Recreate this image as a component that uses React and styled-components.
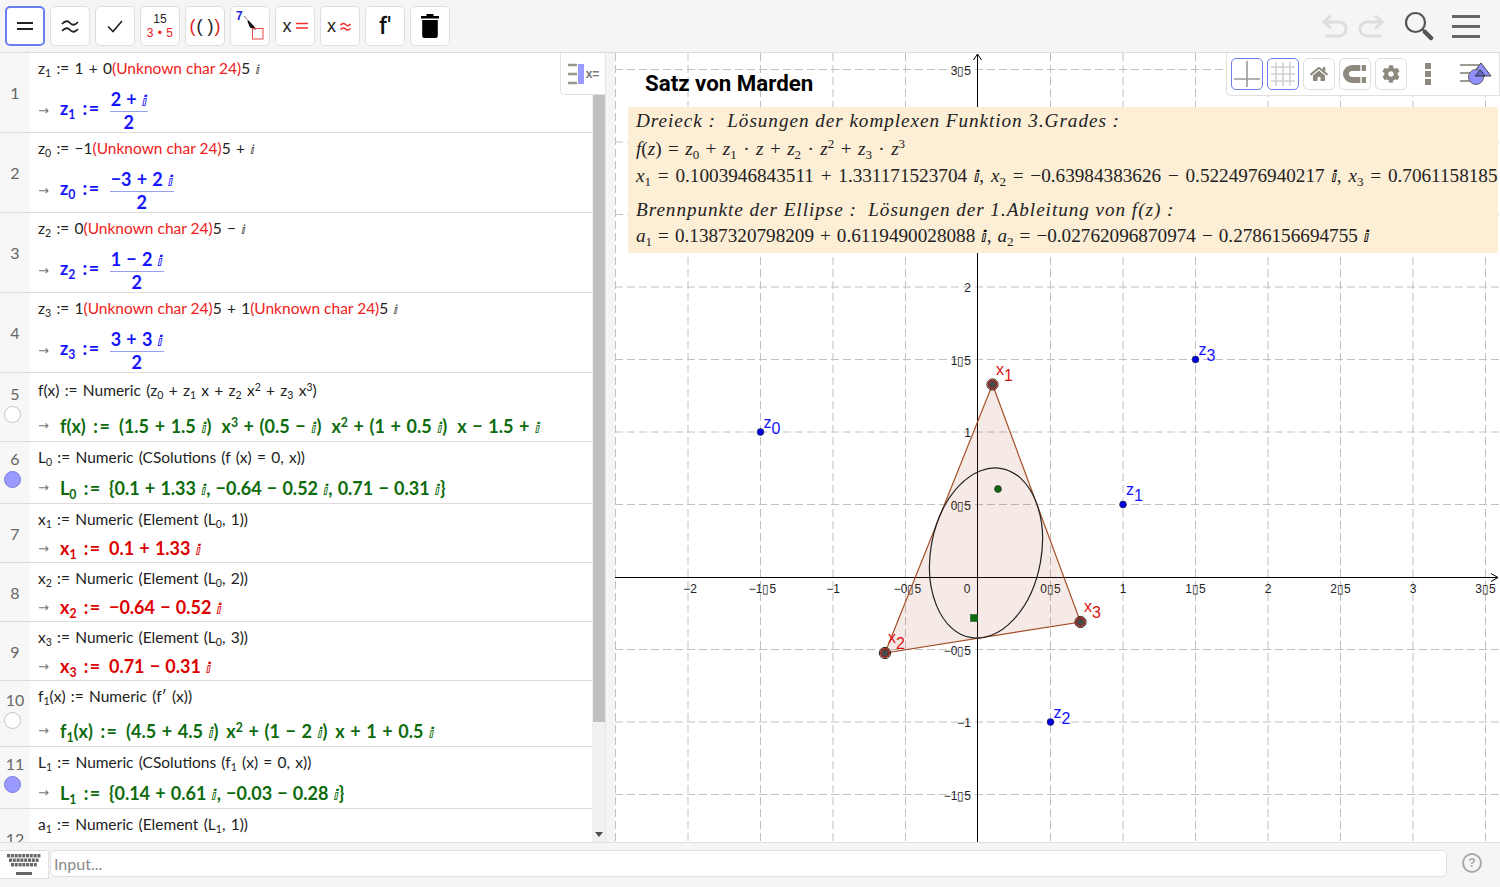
import React from "react";
import styled, { createGlobalStyle } from "styled-components";
import { FaHome, FaCog } from "react-icons/fa";

const Global = createGlobalStyle`
  html, body { margin: 0; padding: 0; background: #fff; }
  body { font-family: "Liberation Sans", Arial, sans-serif; overflow: hidden; }
`;

const I = "\u2148";
const T = "\u2009";

const Page = styled.div`
  width: 1500px;
  height: 887px;
  display: flex;
  flex-direction: column;
  overflow: hidden;
`;

const Toolbar = styled.div`
  height: 52px;
  flex: none;
  box-sizing: content-box;
  background: #f5f5f5;
  border-bottom: 1px solid #dcdcdc;
  display: flex;
  align-items: center;
  padding-left: 5px;
  gap: 5px;
`;

const ToolButton = styled.div`
  width: 40px;
  height: 40px;
  box-sizing: border-box;
  background: #fff;
  border-radius: 5px;
  border: ${(p) => (p.$active ? "2px solid #6a7ff2" : "1px solid #dedede")};
  display: flex;
  flex-direction: column;
  align-items: center;
  justify-content: center;
  color: #111;
`;

const StackText = styled.span`
  font-family: "Liberation Sans", sans-serif;
  font-size: 12px;
  line-height: 14px;
  color: ${(p) => p.$color || "#222"};
  letter-spacing: ${(p) => p.$spacing || 0};
`;

const BraceText = styled.span`
  font-family: "Liberation Sans", sans-serif;
  font-size: ${(p) => p.$size || 20}px;
  color: ${(p) => p.$color || "#222"};
  white-space: pre;
`;

const InlineRow = styled.div`
  display: flex;
  align-items: center;
  gap: ${(p) => p.$gap || 0}px;
`;

const PrimeMark = styled.span`
  font-family: "Roboto", sans-serif;
  font-weight: 500;
  font-size: 23px;
`;

const RightTools = styled.div`
  margin-left: auto;
  display: flex;
  align-items: center;
  padding-right: 20px;
  gap: 18px;
`;

const UndoPair = styled.div`
  display: flex;
  gap: 8px;
  margin-right: 1px;
`;

const Main = styled.div`
  flex: 1;
  min-height: 0;
  display: flex;
`;

const Algebra = styled.div`
  width: 605px;
  flex: none;
  position: relative;
  display: flex;
  overflow: hidden;
`;

const RowList = styled.div`
  width: 592px;
  flex: none;
  display: flex;
  flex-direction: column;
`;

const Row = styled.div`
  height: ${(p) => p.$h}px;
  flex: none;
  box-sizing: border-box;
  border-bottom: 1px solid #dcdcdc;
  display: flex;
`;

const NumCol = styled.div`
  width: 30px;
  flex: none;
  background: #f7f7f7;
  display: flex;
  flex-direction: column;
  align-items: center;
  justify-content: ${(p) => (p.$top ? "flex-start" : "center")};
  padding-top: ${(p) => p.$top || 0}px;
  box-sizing: border-box;
  gap: 3px;
  color: #666;
  font-family: "Lato", sans-serif;
  font-size: 16px;
  line-height: 19px;
`;

const Marble = styled.div`
  width: 17px;
  height: 17px;
  margin-right: 6px;
  border-radius: 50%;
  box-sizing: border-box;
  background: ${(p) => (p.$on ? "#9999ff" : "#fff")};
  border: 1px solid ${(p) => (p.$on ? "#7a7ae0" : "#c4c4c4")};
`;

const Content = styled.div`
  flex: 1;
  min-width: 0;
  padding-left: 8px;
  display: flex;
  flex-direction: column;
`;

const DefLine = styled.div`
  height: ${(p) => p.$h || 30}px;
  flex: none;
  display: flex;
  align-items: center;
  white-space: pre;
  font-family: "Lato", sans-serif;
  font-size: 15.5px;
  word-spacing: 1.3px;
  color: #222;
`;

const OutLine = styled.div`
  flex: 1;
  display: flex;
  align-items: center;
  padding-top: ${(p) => p.$pad}px;
  white-space: pre;
  font-family: "Lato", sans-serif;
  font-weight: 700;
  font-size: 18px;
  word-spacing: ${(p) => p.$ws || 0.8}px;
  color: ${(p) => p.$color};
`;

const Assign = styled.span`
  letter-spacing: 1.5px;
  margin: 0 2px;
`;

const Arrow = styled.span`
  width: 22px;
  flex: none;
  color: #777;
  font-family: "DejaVu Sans", sans-serif;
  font-weight: 400;
  font-size: 13px;
`;

const Red = styled.span`
  color: #f02020;
  word-spacing: 0;
`;

const Imag = styled.span`
  font-family: "DejaVu Sans", sans-serif;
  font-size: 0.82em;
  font-weight: inherit;
`;

const Sub = styled.sub`
  font-size: 68%;
  line-height: 0;
  vertical-align: -0.3em;
`;

const Sup = styled.sup`
  font-size: 68%;
  line-height: 0;
  vertical-align: 0.5em;
`;

const Frac = styled.span`
  display: inline-flex;
  flex-direction: column;
  align-items: center;
  vertical-align: middle;
  margin-left: 7px;
  line-height: 20px;
`;

const Numer = styled.span`
  padding: 0 1px;
  border-bottom: 1px solid #9aa0f0;
`;

const Scrollbar = styled.div`
  width: 13px;
  flex: none;
  background: #f1f1f1;
  display: flex;
  flex-direction: column;
  align-items: center;
`;

const ScrollThumb = styled.div`
  width: 12px;
  height: 669px;
  background: #c1c1c1;
`;

const ScrollArrow = styled.div`
  margin-top: auto;
  margin-bottom: 5px;
  width: 0;
  height: 0;
  border-left: 4px solid transparent;
  border-right: 4px solid transparent;
  border-top: 5px solid #505050;
`;

const ViewToggle = styled.div`
  position: absolute;
  left: 560px;
  top: 0;
  width: 45px;
  height: 42px;
  box-sizing: border-box;
  background: #fff;
  border: 1px solid #e2e2e2;
  border-top: none;
  border-right: none;
  border-bottom-left-radius: 5px;
  display: flex;
  align-items: center;
  justify-content: center;
  gap: 1px;
`;

const ToggleLabel = styled.span`
  font-family: "Liberation Sans", sans-serif;
  font-weight: 700;
  font-size: 12px;
  color: #777;
`;

const Divider = styled.div`
  width: 10px;
  flex: none;
  background: #f5f5f5;
  border-left: 1px solid #e6e6e6;
  box-sizing: border-box;
`;

const Graphics = styled.div`
  flex: 1;
  position: relative;
  overflow: hidden;
  background: #fff;
`;

const Canvas = styled.svg`
  display: block;
  width: 885px;
  height: 789px;
`;

const Title = styled.div`
  position: absolute;
  left: 30px;
  top: 15px;
  font-family: "Roboto", sans-serif;
  font-weight: 700;
  font-size: 22.3px;
  line-height: 30px;
  color: #000;
  white-space: nowrap;
`;

const FormulaBox = styled.div`
  position: absolute;
  left: 13px;
  top: 54px;
  right: 2px;
  height: 146px;
  background: #fdeed6;
  padding-left: 8px;
  box-sizing: border-box;
  overflow: hidden;
  font-family: "Liberation Serif", serif;
  font-size: 19.2px;
  color: #222;

  ${Imag} {
    font-weight: 700;
    color: #000;
  }
`;

const FormulaLine = styled.div`
  height: ${(p) => p.$h}px;
  margin-top: ${(p) => p.$top || 0}px;
  white-space: pre;
  line-height: ${(p) => p.$h}px;
  word-spacing: ${(p) => p.$ws || 0}px;
`;

const Prose = styled.i`
  letter-spacing: 0.95px;
`;

const GraphicsBar = styled.div`
  position: absolute;
  right: 0;
  top: 0;
  width: 274px;
  height: 43px;
  box-sizing: border-box;
  background: #fff;
  border: 1px solid #e0e0e0;
  border-top: none;
  border-bottom-left-radius: 5px;
  display: flex;
  align-items: center;
  padding-left: 4px;
  gap: 4px;
`;

const ViewButton = styled.div`
  width: 32px;
  height: 32px;
  box-sizing: border-box;
  border-radius: 5px;
  border: 1px solid ${(p) => (p.$active ? "#6a7ff2" : "#dedede")};
  display: flex;
  align-items: center;
  justify-content: center;
  color: #8e897f;
  font-size: 18px;
`;

const DotsSlot = styled.div`
  width: 34px;
  display: flex;
  flex-direction: column;
  align-items: center;
  gap: 2px;
`;

const Dot = styled.span`
  width: 6px;
  height: 6px;
  background: #8e897f;
`;

const StyleSlot = styled.div`
  margin-left: 11px;
  display: flex;
`;

const InputBar = styled.div`
  height: 45px;
  flex: none;
  background: #f5f5f5;
  border-top: 1px solid #e0e0e0;
  box-sizing: border-box;
  display: flex;
  align-items: flex-start;
  padding-top: 7px;
`;

const KeyboardButton = styled.div`
  width: 49px;
  height: 29px;
  box-sizing: border-box;
  background: #fff;
  border: 1px solid #e0e0e0;
  border-left: none;
  display: flex;
  align-items: center;
  justify-content: center;
`;

const InputField = styled.div`
  width: 1397px;
  height: 27px;
  margin-left: 1px;
  box-sizing: border-box;
  background: #fff;
  border: 1px solid #e0e0e0;
  border-radius: 5px;
  padding-left: 3px;
  display: flex;
  align-items: center;
  font-family: "Lato", sans-serif;
  font-size: 16px;
  color: #888;
`;

const HelpSlot = styled.div`
  margin-left: 15px;
  margin-top: 3px;
  width: 20px;
  height: 20px;
  box-sizing: border-box;
  border: 2px solid #aaa;
  border-radius: 50%;
  display: flex;
  align-items: center;
  justify-content: center;
  font-family: "Liberation Sans", sans-serif;
  font-weight: 700;
  font-size: 12px;
  color: #aaa;
`;

const Im = () => <Imag>{I}</Imag>;
const As = () => <Assign>:=</Assign>;

const BLUE = "#1414ff";
const GREEN = "#0d6b0d";
const CRIMSON = "#dd0000";

const rows = [
  {
    h: 80, pad: 5, color: BLUE,
    def: <>z<Sub>1</Sub> := 1 + 0<Red>(Unknown char 24)</Red>5 <Im /></>,
    out: <>z<Sub>1</Sub> <As /><Frac><Numer>2 + <Im /></Numer><span>2</span></Frac></>,
  },
  {
    h: 80, pad: 5, color: BLUE,
    def: <>z<Sub>0</Sub> := −1<Red>(Unknown char 24)</Red>5 + <Im /></>,
    out: <>z<Sub>0</Sub> <As /><Frac><Numer>−3 + 2 <Im /></Numer><span>2</span></Frac></>,
  },
  {
    h: 80, pad: 5, color: BLUE,
    def: <>z<Sub>2</Sub> := 0<Red>(Unknown char 24)</Red>5 − <Im /></>,
    out: <>z<Sub>2</Sub> <As /><Frac><Numer>1 − 2 <Im /></Numer><span>2</span></Frac></>,
  },
  {
    h: 80, pad: 5, color: BLUE,
    def: <>z<Sub>3</Sub> := 1<Red>(Unknown char 24)</Red>5 + 1<Red>(Unknown char 24)</Red>5 <Im /></>,
    out: <>z<Sub>3</Sub> <As /><Frac><Numer>3 + 3 <Im /></Numer><span>2</span></Frac></>,
  },
  {
    h: 69, pad: 3, ws: 1.2, color: GREEN, marble: "off", numTop: 11, defH: 34,
    def: <>f(x) := Numeric (z<Sub>0</Sub> + z<Sub>1</Sub> x + z<Sub>2</Sub> x<Sup>2</Sup> + z<Sub>3</Sub> x<Sup>3</Sup>)</>,
    out: <>f(x) <As /> (1.5 + 1.5 <Im />){T}{T} x<Sup>3</Sup> + (0.5 − <Im />){T}{T} x<Sup>2</Sup> + (1 + 0.5 <Im />){T}{T} x − 1.5 + <Im /></>,
  },
  {
    h: 62, pad: 0, color: GREEN, marble: "on", numTop: 7,
    def: <>L<Sub>0</Sub> := Numeric (CSolutions (f (x) = 0, x))</>,
    out: <>L<Sub>0</Sub> <As /> {"{"}0.1 + 1.33 <Im />, −0.64 − 0.52 <Im />, 0.71 − 0.31 <Im />{"}"}</>,
  },
  {
    h: 59, pad: 0, color: CRIMSON,
    def: <>x<Sub>1</Sub> := Numeric (Element (L<Sub>0</Sub>, 1))</>,
    out: <>x<Sub>1</Sub> <As /> 0.1 + 1.33 <Im /></>,
  },
  {
    h: 59, pad: 0, color: CRIMSON,
    def: <>x<Sub>2</Sub> := Numeric (Element (L<Sub>0</Sub>, 2))</>,
    out: <>x<Sub>2</Sub> <As /> −0.64 − 0.52 <Im /></>,
  },
  {
    h: 59, pad: 0, color: CRIMSON,
    def: <>x<Sub>3</Sub> := Numeric (Element (L<Sub>0</Sub>, 3))</>,
    out: <>x<Sub>3</Sub> <As /> 0.71 − 0.31 <Im /></>,
  },
  {
    h: 66, pad: 4, ws: 1.2, color: GREEN, marble: "off", numTop: 9,
    def: <>f<Sub>1</Sub>(x) := Numeric (f′ (x))</>,
    out: <>f<Sub>1</Sub>(x) <As /> (4.5 + 4.5 <Im />){T} x<Sup>2</Sup> + (1 − 2 <Im />){T} x + 1 + 0.5 <Im /></>,
  },
  {
    h: 62, pad: 0, color: GREEN, marble: "on", numTop: 7,
    def: <>L<Sub>1</Sub> := Numeric (CSolutions (f<Sub>1</Sub> (x) = 0, x))</>,
    out: <>L<Sub>1</Sub> <As /> {"{"}0.14 + 0.61 <Im />, −0.03 − 0.28 <Im />{"}"}</>,
  },
  {
    h: 60, pad: 0, color: GREEN,
    def: <>a<Sub>1</Sub> := Numeric (Element (L<Sub>1</Sub>, 1))</>,
    out: null,
  },
];

const U = 145;
const OX = 978;
const OY = 577;
const px = (v) => OX + v * U;
const py = (v) => OY - v * U;

const gridX = [-2.5, -2, -1.5, -1, -0.5, 0.5, 1, 1.5, 2, 2.5, 3, 3.5];
const gridY = [-1.5, -1, -0.5, 0.5, 1, 1.5, 2, 2.5, 3, 3.5];
const fmt = (v) => (v < 0 ? "−" : "") + String(Math.abs(v)).replace(".", "\u25AF");

const xLabels = gridX.filter((v) => v > -2.5);
const yLabels = [-1.5, -1, -0.5, 0.5, 1, 1.5, 2, 3.5];

const bluePoints = [
  { x: -1.5, y: 1, n: "0", dy: -4 },
  { x: 1, y: 0.5, n: "1", dy: -10 },
  { x: 0.5, y: -1, n: "2", dy: -4 },
  { x: 1.5, y: 1.5, n: "3", dy: -5 },
];

const redPoints = [
  { x: 992.5, y: 384.5, n: "1", lx: 996, ly: 375 },
  { x: 885, y: 653, n: "2", lx: 888, ly: 643 },
  { x: 1080.5, y: 622, n: "3", lx: 1084, ly: 612 },
];

const PointLabel = ({ x, y, sym, n, color }) => (
  <text x={x} y={y} fill={color} fontFamily="Liberation Sans, sans-serif" fontSize="16">
    {sym}
    <tspan dy="6">{n}</tspan>
  </text>
);

const Plot = () => (
  <Canvas viewBox="615 53 885 789">
    <g stroke="#c0c0c0" strokeWidth="1" strokeDasharray="8 4">
      {gridX.map((v) => (
        <line key={v} x1={px(v)} x2={px(v)} y1="53" y2="842" />
      ))}
      {gridY.map((v) => (
        <line key={v} x1="615" x2="1500" y1={py(v)} y2={py(v)} />
      ))}
    </g>
    <g stroke="#000" strokeWidth="1" fill="none">
      <line x1="615" x2="1498" y1={OY + 0.5} y2={OY + 0.5} />
      <line x1={OX - 0.5} x2={OX - 0.5} y1="842" y2="54" />
      <path d="M1491 573.5 L1498 577.5 L1491 581.5" />
      <path d="M973.5 60 L977.5 54 L981.5 60" />
    </g>
    <g fontFamily="Liberation Sans, sans-serif" fontSize="12" fill="#222">
      {xLabels.map((v) => (
        <text key={v} x={px(v) + (v < -1 || v === -0.5 ? 2 : 0)} y="593" textAnchor="middle">{fmt(v)}</text>
      ))}
      <text x="967" y="593" textAnchor="middle">0</text>
      {yLabels.map((v) => (
        <text key={v} x="971" y={py(v) + 5} textAnchor="end">{fmt(v)}</text>
      ))}
    </g>
    <polygon
      points="992.5,384.5 885,653 1080.5,622"
      fill="#993300"
      fillOpacity="0.1"
      stroke="#a5502a"
      strokeWidth="1.2"
    />
    <ellipse
      cx="986"
      cy="553"
      rx="55.2"
      ry="85.9"
      transform="rotate(10.5 986 553)"
      fill="none"
      stroke="#222"
      strokeWidth="1.2"
    />
    <circle cx="998" cy="489" r="3.4" fill="#0d6b0d" stroke="#333" strokeWidth="0.8" />
    <rect x="970.5" y="614.5" width="7" height="7" fill="#0d6b0d" stroke="#1f5f2f" strokeWidth="0.6" />
    {bluePoints.map((p) => (
      <g key={p.n}>
        <circle cx={px(p.x)} cy={py(p.y)} r="3.4" fill="#0000e0" stroke="#223" strokeWidth="0.6" />
        <PointLabel x={px(p.x) + 3} y={py(p.y) + p.dy} sym="z" n={p.n} color="#1414ff" />
      </g>
    ))}
    {redPoints.map((p) => (
      <g key={p.n}>
        <circle cx={p.x} cy={p.y} r="4.4" fill="#4a4a4a" stroke="#c01808" strokeWidth="1.2" />
        <circle cx={p.x} cy={p.y} r="5.6" fill="none" stroke="#222" strokeWidth="1" />
        <PointLabel x={p.lx} y={p.ly} sym="x" n={p.n} color="#dd1111" />
      </g>
    ))}
  </Canvas>
);

const TwoLines = () => (
  <svg width="24" height="24" viewBox="0 0 24 24" stroke="#222" strokeWidth="2" fill="none">
    <path d="M4 9 H20 M4 15 H20" />
  </svg>
);

const Wavy = ({ color = "#222", w = 24, sw = 1.8 }) => (
  <svg width={w} height={w} viewBox="0 0 24 24" stroke={color} strokeWidth={sw} fill="none">
    <path d="M4 10 C7 6.5 10 6.5 12 9 S17 11.5 20 8 M4 17 C7 13.5 10 13.5 12 16 S17 18.5 20 15" />
  </svg>
);

const CheckIcon = () => (
  <svg width="24" height="24" viewBox="0 0 24 24" stroke="#222" strokeWidth="1.6" fill="none">
    <path d="M5 12.5 L10 17.5 L19 7" />
  </svg>
);

const AttachIcon = () => (
  <svg width="38" height="38" viewBox="0 0 38 38" fill="none">
    <text x="5" y="13" fontFamily="Liberation Sans, sans-serif" fontWeight="700" fontSize="12" fill="#2222dd">7</text>
    <path d="M13 9 L23 20" stroke="#555" strokeWidth="0.8" />
    <path d="M17 14 L24.5 22 L19.5 20 Z" fill="#111" stroke="#111" strokeWidth="1.4" />
    <rect x="21.5" y="21.5" width="10.5" height="10.5" stroke="#ee4444" strokeWidth="1" />
  </svg>
);

const TrashIcon = () => (
  <svg width="20" height="26" viewBox="0 0 20 26" fill="#000">
    <path d="M6.5 1 H13.5 V3 H19 V5.5 H1 V3 H6.5 Z" />
    <path d="M2.2 7 H17.8 V22.5 A2.5 2.5 0 0 1 15.3 25 H4.7 A2.5 2.5 0 0 1 2.2 22.5 Z" />
  </svg>
);

const RedEquals = () => (
  <svg width="12" height="12" viewBox="0 0 12 12" stroke="#f03030" strokeWidth="1.4">
    <path d="M0 3.5 H12 M0 8 H12" />
  </svg>
);

const UndoIcon = ({ flip }) => (
  <svg
    width="28"
    height="24"
    viewBox="0 0 28 24"
    fill="none"
    stroke="#dedede"
    strokeWidth="3"
    style={flip ? { transform: "scaleX(-1)" } : undefined}
  >
    <path d="M3 8 H18 A7 7 0 0 1 18 22 H4" />
    <path d="M10 1.5 L3 8 L10 14.5" />
  </svg>
);

const SearchIcon = () => (
  <svg width="30" height="30" viewBox="0 0 30 30" fill="none" stroke="#555">
    <circle cx="11.5" cy="11.5" r="9.5" strokeWidth="2.2" />
    <path d="M18.5 18.5 L21 21" strokeWidth="2.2" />
    <path d="M21 21 L27 27" strokeWidth="4.5" strokeLinecap="round" />
  </svg>
);

const MenuIcon = () => (
  <svg width="28" height="24" viewBox="0 0 28 24" stroke="#666" strokeWidth="3">
    <path d="M0 2.5 H28 M0 12.5 H28 M0 22.5 H28" />
  </svg>
);

const ToggleIcon = () => (
  <svg width="18" height="24" viewBox="0 0 18 24">
    <path d="M1 3 H10 M1 12 H10 M1 21 H10" stroke="#9a958a" strokeWidth="2.4" />
    <rect x="11" y="2" width="6" height="20" fill="#9a9aff" />
  </svg>
);

const AxesIcon = () => (
  <svg width="26" height="26" viewBox="0 0 26 26" stroke="#999" strokeWidth="1.6">
    <path d="M13 0 V26 M0 18 H26" />
  </svg>
);

const GridIcon = () => (
  <svg width="26" height="26" viewBox="0 0 26 26" stroke="#d4d0d0" strokeWidth="1.5">
    <path d="M6 1 V25 M13 1 V25 M20 1 V25 M1 6 H25 M1 13 H25 M1 20 H25" />
  </svg>
);

const MagnetIcon = () => (
  <svg width="26" height="22" viewBox="0 0 26 22" fill="none">
    <path d="M24 5 H10 A6 6 0 0 0 10 17 H24" stroke="#8e897f" strokeWidth="6" />
    <path d="M19 2 V8 M19 14 V20" stroke="#fff" strokeWidth="1.4" />
  </svg>
);

const StyleIcon = () => (
  <svg width="32" height="24" viewBox="0 0 32 24" fill="none">
    <path d="M0 3 H19 M0 11 H12 M0 19 H11" stroke="#a09b90" strokeWidth="2.2" />
    <path d="M21 1 L31 14 H11 Z" fill="#8f8fff" stroke="#444" strokeWidth="1" />
    <circle cx="16" cy="15" r="7.5" fill="#8f8fff" stroke="#666" strokeWidth="1" />
    <path d="M20.5 8 L25 14 H15 Z" fill="#6666cc" stroke="#333" strokeWidth="1" />
  </svg>
);

const KeyboardIcon = () => (
  <svg width="34" height="22" viewBox="0 0 34 22" fill="#666">
    {[0, 1, 2].map((r) =>
      Array.from({ length: 9 - r }).map((_, c) => (
        <rect key={r + "-" + c} x={r * 2 + c * 3.8} y={r * 4.5} width="3" height="3.4" />
      ))
    )}
    <rect x="9" y="18" width="16" height="3" />
  </svg>
);

export default function App() {
  return (
    <Page>
      <Global />
      <Toolbar>
        <ToolButton $active><TwoLines /></ToolButton>
        <ToolButton><Wavy /></ToolButton>
        <ToolButton><CheckIcon /></ToolButton>
        <ToolButton>
          <StackText>15</StackText>
          <StackText $color="#f02020" $spacing="0.5px">3 • 5</StackText>
        </ToolButton>
        <ToolButton>
          <InlineRow $gap={1}>
            <BraceText $size={18} $color="#e02020">(</BraceText>
            <BraceText $size={18}>( )</BraceText>
            <BraceText $size={18} $color="#e02020">)</BraceText>
          </InlineRow>
        </ToolButton>
        <ToolButton><AttachIcon /></ToolButton>
        <ToolButton>
          <InlineRow $gap={4}><BraceText $size={18}>x</BraceText><RedEquals /></InlineRow>
        </ToolButton>
        <ToolButton>
          <InlineRow $gap={2}><BraceText $size={18}>x</BraceText><Wavy color="#f03030" w={15} sw={2.4} /></InlineRow>
        </ToolButton>
        <ToolButton><PrimeMark>f′</PrimeMark></ToolButton>
        <ToolButton><TrashIcon /></ToolButton>
        <RightTools>
          <UndoPair>
            <UndoIcon />
            <UndoIcon flip />
          </UndoPair>
          <SearchIcon />
          <MenuIcon />
        </RightTools>
      </Toolbar>
      <Main>
        <Algebra>
          <RowList>
            {rows.map((row, i) => (
              <Row key={i} $h={row.h}>
                <NumCol $top={row.numTop}>
                  {i + 1}
                  {row.marble && <Marble $on={row.marble === "on"} />}
                </NumCol>
                <Content>
                  <DefLine $h={row.defH}><span>{row.def}</span></DefLine>
                  {row.out && (
                    <OutLine $pad={row.pad} $ws={row.ws} $color={row.color}>
                      <Arrow>→</Arrow>
                      <span>{row.out}</span>
                    </OutLine>
                  )}
                </Content>
              </Row>
            ))}
          </RowList>
          <Scrollbar>
            <ScrollThumb />
            <ScrollArrow />
          </Scrollbar>
          <ViewToggle>
            <ToggleIcon />
            <ToggleLabel>x=</ToggleLabel>
          </ViewToggle>
        </Algebra>
        <Divider />
        <Graphics>
          <Plot />
          <Title>Satz von Marden</Title>
          <FormulaBox>
            <FormulaLine $h={28}><Prose>Dreieck :  Lösungen der komplexen Funktion 3.Grades :</Prose></FormulaLine>
            <FormulaLine $h={28} $ws={1.6}>
              <i>f</i>(<i>z</i>) = <i>z</i><Sub>0</Sub> + <i>z</i><Sub>1</Sub> · <i>z</i> + <i>z</i><Sub>2</Sub> · <i>z</i><Sup>2</Sup> + <i>z</i><Sub>3</Sub> · <i>z</i><Sup>3</Sup>
            </FormulaLine>
            <FormulaLine $h={26} $ws={2}>
              <i>x</i><Sub>1</Sub> = 0.1003946843511 + 1.331171523704 <Im />, <i>x</i><Sub>2</Sub> = −0.63984383626 − 0.5224976940217 <Im />, <i>x</i><Sub>3</Sub> = 0.70611581857115
            </FormulaLine>
            <FormulaLine $h={26} $top={8}><Prose>Brennpunkte der Ellipse :  Lösungen der 1.Ableitung von f(z) :</Prose></FormulaLine>
            <FormulaLine $h={26} $ws={1.2}>
              <i>a</i><Sub>1</Sub> = 0.1387320798209 + 0.6119490028088 <Im />, <i>a</i><Sub>2</Sub> = −0.02762096870974 − 0.2786156694755 <Im />
            </FormulaLine>
          </FormulaBox>
          <GraphicsBar>
            <ViewButton $active><AxesIcon /></ViewButton>
            <ViewButton $active><GridIcon /></ViewButton>
            <ViewButton><FaHome /></ViewButton>
            <ViewButton><MagnetIcon /></ViewButton>
            <ViewButton><FaCog /></ViewButton>
            <DotsSlot><Dot /><Dot /><Dot /></DotsSlot>
            <StyleSlot><StyleIcon /></StyleSlot>
          </GraphicsBar>
        </Graphics>
      </Main>
      <InputBar>
        <KeyboardButton><KeyboardIcon /></KeyboardButton>
        <InputField>Input...</InputField>
        <HelpSlot>?</HelpSlot>
      </InputBar>
    </Page>
  );
}
